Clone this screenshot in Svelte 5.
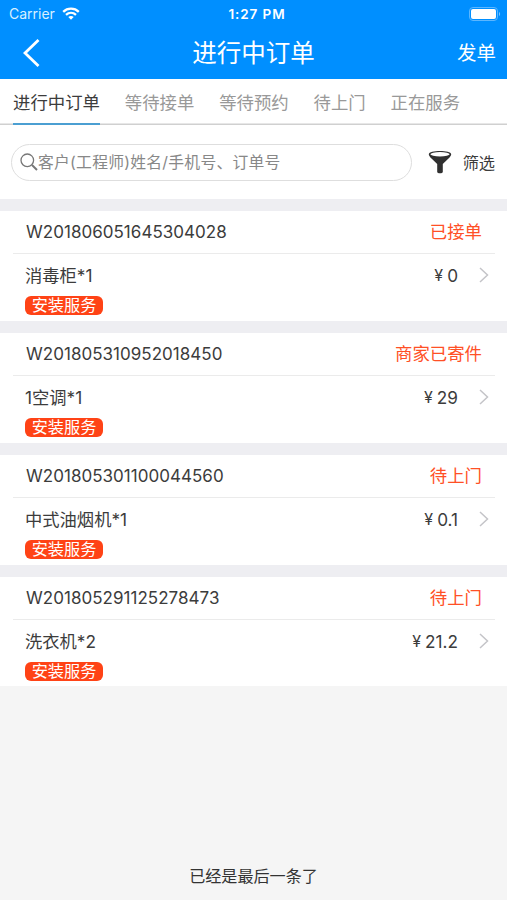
<script>
  const tabs = ['进行中订单', '等待接单', '等待预约', '待上门', '正在服务'];

  const orders = [
    { no: 'W201806051645304028', status: '已接单', goods: '消毒柜*1', price: '0', service: '安装服务' },
    { no: 'W201805310952018450', status: '商家已寄件', goods: '1空调*1', price: '29', service: '安装服务' },
    { no: 'W201805301100044560', status: '待上门', goods: '中式油烟机*1', price: '0.1', service: '安装服务' },
    { no: 'W201805291125278473', status: '待上门', goods: '洗衣机*2', price: '21.2', service: '安装服务' }
  ];

  let active = $state(0);
  let keyword = $state('');
</script>

<main class="page">
  <header class="top">
    <div class="status-bar">
      <div class="carrier">
        <span>Carrier</span>
        <svg width="18" height="13" viewBox="0 0 18 13" fill="none" stroke="#fff" stroke-width="2.3">
          <path d="M1.2 4.8C5.6 .6 12.4 .6 16.8 4.8" />
          <path d="M4 7.9c2.9-2.6 7.1-2.6 10 0" />
          <path d="M6.3 9.9 9 12.7l2.7-2.8c-1.5-1.3-3.9-1.3-5.4 0z" fill="#fff" stroke="none" />
        </svg>
      </div>
      <span class="time">1:27 PM</span>
      <svg class="battery" width="32" height="14" viewBox="0 0 32 14">
        <rect x=".5" y=".5" width="28" height="13" rx="3.5" fill="none" stroke="#5cb6ff" />
        <rect x="2" y="2" width="25" height="10" rx="2" fill="#fff" />
        <path d="M30 5v4c1.5-.7 1.5-3.3 0-4z" fill="#7cc4ff" />
      </svg>
    </div>
    <nav class="nav-bar">
      <button class="back" aria-label="返回">
        <svg width="17" height="28" viewBox="0 0 17 28" fill="none" stroke="#fff" stroke-width="2.8">
          <path d="M15.5 1 2 14l13.5 13" />
        </svg>
      </button>
      <h1>进行中订单</h1>
      <button class="publish">发单</button>
    </nav>
  </header>

  <div class="tabs">
    {#each tabs as tab, i}
      <button class="tab" class:active={active === i} onclick={() => (active = i)}>{tab}</button>
    {/each}
  </div>

  <section class="search">
    <label class="search-box">
      <svg width="18" height="18" viewBox="0 0 18 18" fill="none" stroke="#777">
        <circle cx="7.3" cy="7.3" r="6.3" stroke-width="1.3" />
        <path d="m12 12 5 5" stroke-width="2" />
      </svg>
      <input bind:value={keyword} placeholder="客户(工程师)姓名/手机号、订单号" />
    </label>
    <button class="filter">
      <svg width="24" height="24" viewBox="0 0 24 24">
        <path d="M.8 4.2C.8 5.5 2 7 3.5 8.400L9.200 14v8c0 1.800 5.600 1.800 5.600 0v-8l5.700-5.600C22 7 23.2 5.500 23.200 4.200 23.200 0 .8 0 .8 4.200z" fill="#303030" />
        <ellipse cx="12" cy="4.2" rx="9.6" ry="2.2" fill="#fff" />
      </svg>
      <span>筛选</span>
    </button>
  </section>

  <section class="orders">
    {#each orders as order}
      <article class="order">
        <div class="order-head">
          <span class="order-no">{order.no}</span>
          <span class="order-status">{order.status}</span>
        </div>
        <div class="order-body">
          <div class="goods">
            <p>{order.goods}</p>
            <span class="tag">{order.service}</span>
          </div>
          <div class="price">
            <span class="yen">¥</span>
            <span>{order.price}</span>
            <svg width="10" height="16" viewBox="0 0 10 16" fill="none" stroke="#c4c4c8" stroke-width="1.5">
              <path d="m1 1 7.500 7L1 15" />
            </svg>
          </div>
        </div>
      </article>
    {/each}
  </section>

  <p class="end">已经是最后一条了</p>
</main>

<style>
:global(body) {
  background: #f5f5f5;
}

.page {
  height: 900px;
  display: flex;
  flex-direction: column;
  box-sizing: border-box;
  padding-bottom: 12px;
  background: #f5f5f5;
  color: #3c3c3c;
  font-family: Inter, "Noto Sans CJK SC", sans-serif;
}

button {
  padding: 0;
  border: none;
  background: none;
  color: inherit;
  font: inherit;
  cursor: pointer;
}

svg {
  display: block;
  flex-shrink: 0;
}

/* Header */
.top {
  height: 79px;
  background: #008fff;
  color: #fff;
}

.status-bar {
  height: 27px;
  padding: 0 6px 0 9px;
  display: grid;
  grid-template-columns: 1fr auto 1fr;
  align-items: center;
  font-size: 14px;
}

.carrier {
  display: flex;
  align-items: center;
  gap: 7px;
  color: #d8efff;
}

.time {
  font-size: 13.5px;
  font-weight: 600;
  letter-spacing: 0.9px;
  margin-right: -4px;
}

.battery {
  justify-self: end;
}

.nav-bar {
  height: 51px;
  padding: 0 11px 0 23px;
  display: grid;
  grid-template-columns: 1fr auto 1fr;
  align-items: center;
}

.back {
  justify-self: start;
}

h1 {
  margin: 0 0 0 -12px;
  font-size: 24.5px;
  font-weight: 400;
  line-height: 30px;
}

.publish {
  justify-self: end;
  padding-bottom: 2px;
  font-size: 19.5px;
}

/* Tabs */
.tabs {
  height: 46px;
  padding: 0 13px;
  box-sizing: border-box;
  display: flex;
  gap: 24.8px;
  background: #fff;
  box-shadow: inset 0 -1.5px #d0d0d0;
}

.tab {
  border-bottom: 2px solid transparent;
  color: #999;
  font-size: 17.4px;
  white-space: nowrap;
}

.tab.active {
  border-color: #4b9fd2;
  color: #3c3c3c;
}

/* Search */
.search {
  height: 74px;
  padding: 0 12px 0 11px;
  box-sizing: border-box;
  display: flex;
  align-items: center;
  background: #fff;
}

.search-box {
  width: 401px;
  height: 37px;
  padding: 0 9px 0 8px;
  box-sizing: border-box;
  display: flex;
  align-items: center;
  border: 1px solid #dedede;
  border-radius: 19px;
}

input {
  flex: 1;
  min-width: 0;
  padding: 0;
  border: none;
  outline: none;
  background: none;
  font: inherit;
  font-size: 15.8px;
  letter-spacing: 0.25px;
}

input::placeholder {
  color: #888;
}

.filter {
  display: flex;
  align-items: center;
  gap: 11px;
  margin-left: auto;
  font-size: 16.2px;
}

/* Orders */
.orders {
  padding-top: 12px;
  display: flex;
  flex-direction: column;
  gap: 12px;
  background: #eeeef2;
}

.order {
  height: 110px;
  padding: 0 12px 0 13px;
  background: #fff;
}

.order:last-child {
  height: 109px;
}

.order-head {
  height: 42px;
  padding: 0 13px;
  display: flex;
  align-items: center;
  justify-content: space-between;
  border-bottom: 1px solid #ebebeb;
  font-size: 17.4px;
}

.order-no {
  padding-bottom: 1px;
  font-size: 17px;
  letter-spacing: 0.03px;
}

.order-status {
  padding-bottom: 3px;
  color: #ff5026;
}

.order-body {
  padding: 9px 6px 0 12px;
  display: flex;
  justify-content: space-between;
}

.goods p {
  margin: 0;
  font-size: 17.3px;
  line-height: 25px;
}

.tag {
  display: block;
  width: 78px;
  height: 19px;
  margin-top: 8px;
  border-radius: 6px;
  background: #ff4316;
  color: #fff;
  font-size: 16.2px;
  line-height: 18px;
  text-align: center;
}

.price {
  height: 24px;
  display: flex;
  align-items: center;
  font-size: 17.2px;
}

.yen {
  margin-right: 4px;
  font-size: 16px;
}

.price svg {
  margin-left: 21px;
}

/* Footer */
.end {
  margin: auto 0 0;
  color: #333;
  font-size: 16.1px;
  line-height: 24px;
  text-align: center;
}
</style>
